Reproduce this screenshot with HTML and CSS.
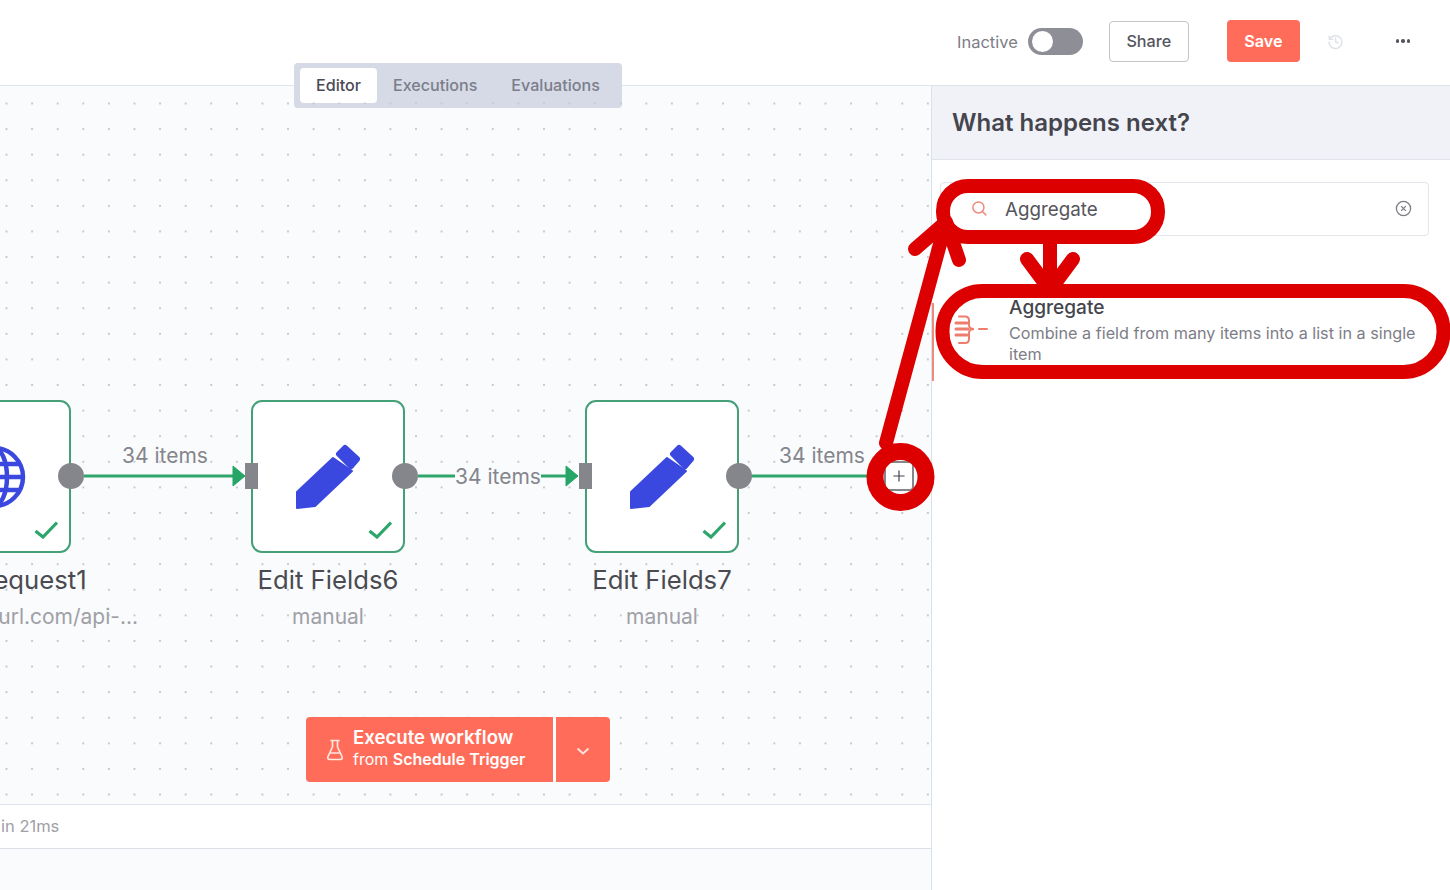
FILE: index.html
```html
<!DOCTYPE html>
<html lang="en">
<head>
    <meta charset="UTF-8">
    <meta name="viewport" content="width=device-width, initial-scale=1.0">
    <title>Workflow editor</title>
    <link rel="stylesheet" href="styles.css">
</head>
<body>
    <div class="page">
        <header class="topbar">
            <span class="status-label">Inactive</span>
            <span class="toggle"><span class="toggle-knob"></span></span>
            <button class="btn-share">Share</button>
            <button class="btn-save">Save</button>
            <svg class="icon-history" viewBox="0 0 16 16">
                <path d="M2.2 3v3h3M2.6 6A6 6 0 1 1 2 8.5M8 4.8V8l2.2 1.4"/>
            </svg>
            <span class="more-dots"><i></i><i></i><i></i></span>
        </header>

        <div class="tabs">
            <span class="tab tab-active">Editor</span>
            <span class="tab">Executions</span>
            <span class="tab">Evaluations</span>
        </div>

        <main class="workspace">
            <section class="canvas">
                <div class="stage">
                    <div class="node node-request">
                        <div class="node-box">
                            <svg class="icon-globe" viewBox="0 0 66 66">
                                <circle cx="33" cy="33" r="29"/>
                                <ellipse cx="33" cy="33" rx="13" ry="29"/>
                                <path d="M4 33H62M8 20H58M8 46H58"/>
                            </svg>
                            <svg class="node-check" viewBox="0 0 24 18"><path d="M1.5 10 9 16 23 1.5"/></svg>
                        </div>
                        <div class="node-title">HTTP Request1</div>
                        <div class="node-sub">https://dummyurl.com/api-...</div>
                    </div>
                    <div class="node node-six">
                        <div class="node-box">
                            <svg class="icon-pen" viewBox="0 0 66 66">
                                <path d="M2 64V48L38 14 57 27 20 62Z"/>
                                <path class="pen-cap" d="M44 10 50 4 62 15 56 22Z"/>
                            </svg>
                            <svg class="node-check" viewBox="0 0 24 18"><path d="M1.5 10 9 16 23 1.5"/></svg>
                        </div>
                        <div class="node-title">Edit Fields6</div>
                        <div class="node-sub">manual</div>
                    </div>
                    <div class="node node-seven">
                        <div class="node-box">
                            <svg class="icon-pen" viewBox="0 0 66 66">
                                <path d="M2 64V48L38 14 57 27 20 62Z"/>
                                <path class="pen-cap" d="M44 10 50 4 62 15 56 22Z"/>
                            </svg>
                            <svg class="node-check" viewBox="0 0 24 18"><path d="M1.5 10 9 16 23 1.5"/></svg>
                        </div>
                        <div class="node-title">Edit Fields7</div>
                        <div class="node-sub">manual</div>
                    </div>

                    <!-- edges and handles, in stage coordinates -->
                    <svg class="edges" viewBox="0 0 931 719">
                        <path class="edge" d="M84 391H238M418 391H572M751 391H868"/>
                        <path class="edge-head" d="M233 381 245 391 233 401ZM566 381 578 391 566 401Z"/>
                        <circle class="handle" cx="71" cy="391" r="13"/>
                        <circle class="handle" cx="405" cy="391" r="13"/>
                        <circle class="handle" cx="739" cy="391" r="13"/>
                        <rect class="handle" x="245" y="378" width="13" height="26"/>
                        <rect class="handle" x="579" y="378" width="13" height="26"/>
                    </svg>

                    <span class="edge-label edge-label-a">34 items</span>
                    <span class="edge-label edge-label-b">34 items</span>
                    <span class="edge-label edge-label-c">34 items</span>

                    <button class="add-node">
                        <svg viewBox="0 0 14 14"><path d="M7 0.5V13.5M0.5 7H13.5"/></svg>
                    </button>

                    <div class="execute">
                        <button class="execute-main">
                            <svg class="icon-flask" viewBox="0 0 18 22">
                                <path d="M5 1.5H13M6.5 1.5V8L2 17.5Q1 20.5 4 20.5H14Q17 20.5 16 17.5L11.5 8V1.5M4 14H14"/>
                            </svg>
                            <span class="execute-text">
                                <strong>Execute workflow</strong>
                                <small>from <b>Schedule Trigger</b></small>
                            </span>
                        </button>
                        <button class="execute-more">
                            <svg viewBox="0 0 14 8"><path d="M1.5 1.5 7 6.5 12.5 1.5"/></svg>
                        </button>
                    </div>
                </div>
                <div class="log-strip">in 21ms</div>
                <div class="log-rest"></div>
            </section>

            <aside class="panel">
                <div class="panel-header">What happens next?</div>
                <div class="search">
                    <svg class="icon-search" viewBox="0 0 16 16">
                        <circle cx="7" cy="7" r="5.2"/><path d="M11 11 14 14"/>
                    </svg>
                    <span class="search-text">Aggregate</span>
                    <svg class="icon-clear" viewBox="0 0 16 16">
                        <circle cx="8" cy="8" r="6.7"/><path d="M5.8 5.8 10.2 10.2M10.2 5.8 5.8 10.2"/>
                    </svg>
                </div>
                <div class="result">
                    <svg class="icon-aggregate" viewBox="0 0 36 30">
                        <path class="bars" d="M3 8H14M3 14H15M3 20H14"/>
                        <path d="M6 1.5H12Q16 1.5 16 5.5V10Q16 14 21 14Q16 14 16 18V24Q16 28 12 28H6M26 14H34"/>
                    </svg>
                    <div class="result-text">
                        <div class="result-title">Aggregate</div>
                        <div class="result-desc">Combine a field from many items into a list in a single item</div>
                    </div>
                </div>
            </aside>
        </main>

        <!-- hand-drawn red marks lying over the screenshot -->
        <svg class="marks" viewBox="0 0 1450 890">
            <rect x="943" y="186" width="215" height="51" rx="25"/>
            <rect x="942.5" y="291" width="501" height="81" rx="40"/>
            <circle cx="900.5" cy="477" r="25.5" class="mark-ring"/>
            <path d="M886 443 946 222M915 249 946 222 959 260M1050 244V288M1027 259 1050 290 1073 259"/>
        </svg>
    </div>
</body>
</html>
```

FILE: styles.css
```css
* {
    box-sizing: border-box;
}
body {
    font-family: Inter, "Liberation Sans", sans-serif;
    margin: 0;
    padding: 0;
    background: #ffffff;
    color: #45454d;
}
button {
    font-family: inherit;
    cursor: pointer;
}
.page {
    position: relative;
    width: 1450px;
    height: 890px;
    overflow: hidden;
    display: flex;
    flex-direction: column;
}

/* Top bar */
.topbar {
    height: 86px;
    flex: none;
    display: flex;
    align-items: center;
    padding: 0 35px 3px 957px;
    background: #ffffff;
    border-bottom: 1px solid #dfe3ea;
}
.status-label {
    padding-top: 1px;
    font-size: 16.5px;
    color: #7d7d87;
}
.toggle {
    width: 55px;
    height: 27px;
    margin-left: 10px;
    padding: 3px;
    border-radius: 14px;
    background: #8e8e96;
}
.toggle-knob {
    display: block;
    width: 21px;
    height: 21px;
    margin-left: 1px;
    border-radius: 50%;
    background: #ffffff;
}
.btn-share {
    width: 80px;
    height: 41px;
    margin-left: 26px;
    border: 1px solid #c3c3c8;
    border-radius: 4px;
    background: #ffffff;
    color: #55555d;
    font-size: 16.2px;
    font-weight: 500;
}
.btn-save {
    width: 73px;
    height: 42px;
    margin-left: 38px;
    border: none;
    border-radius: 4px;
    background: #ff6d5a;
    color: #ffffff;
    font-size: 16.2px;
    font-weight: 600;
}
.icon-history {
    width: 17px;
    height: 17px;
    margin-left: 27px;
    fill: none;
    stroke: #dfe2e8;
    stroke-width: 1.4;
    stroke-linecap: round;
    stroke-linejoin: round;
}
.more-dots {
    display: flex;
    gap: 2px;
    margin-left: 52px;
}
.more-dots i {
    width: 3.5px;
    height: 3.5px;
    border-radius: 50%;
    background: #55555d;
}

/* Tabs */
.tabs {
    position: absolute;
    left: 294px;
    top: 63px;
    width: 328px;
    height: 45px;
    display: flex;
    align-items: center;
    padding: 0 6px;
    border-radius: 4px;
    background: #d5dae6;
}
.tab {
    height: 35px;
    line-height: 35px;
    padding: 0 16px;
    font-size: 16.1px;
    font-weight: 500;
    color: #7b7e8a;
}
.tab:last-child {
    margin-left: 2px;
}
.tab-active {
    width: 77px;
    border-radius: 4px;
    background: #ffffff;
    color: #4a4a52;
}

/* Canvas */
.workspace {
    flex: 1;
    display: flex;
    min-height: 0;
}
.canvas {
    width: 932px;
    flex: none;
    display: flex;
    flex-direction: column;
    background: #f9fbfd;
    border-right: 1px solid #d9e2ea;
}
.stage {
    position: relative;
    flex: 1;
    overflow: hidden;
    background-image: radial-gradient(circle, #c6cad2 1px, transparent 1.2px);
    background-size: 25.6px 25.6px;
    background-position: 19.3px 4.7px;
}
.node {
    position: absolute;
    top: 314px;
    width: 154px;
    display: flex;
    flex-direction: column;
    align-items: center;
    white-space: nowrap;
}
.node-request {
    left: -83px;
}
.node-request .node-sub {
    margin-left: 4px;
}
.node-six {
    left: 251px;
}
.node-seven {
    left: 585px;
}
.node-box {
    position: relative;
    width: 154px;
    height: 153px;
    flex: none;
    display: flex;
    align-items: center;
    justify-content: center;
    background: #ffffff;
    border: 2.5px solid #45a078;
    border-radius: 11px;
}
.node-title {
    margin-top: 12px;
    font-size: 25.7px;
    line-height: 30px;
    color: #4a4a50;
}
.node-sub {
    margin-top: 9px;
    font-size: 21px;
    line-height: 26px;
    color: #a0a0a6;
}
.icon-pen {
    width: 66px;
    height: 66px;
    fill: #3b48e0;
    stroke: #3b48e0;
    stroke-width: 2;
    stroke-linejoin: round;
}
.icon-pen .pen-cap {
    stroke-width: 6;
}
.icon-globe {
    width: 66px;
    height: 66px;
    fill: none;
    stroke: #3b48e0;
    stroke-width: 4.5;
}
.node-check {
    position: absolute;
    right: 11px;
    bottom: 12px;
    width: 24px;
    height: 18px;
    fill: none;
    stroke: #2da56b;
    stroke-width: 3.2;
}
.edges {
    position: absolute;
    left: 0;
    top: -1px;
    width: 931px;
    height: 719px;
}
.edge {
    fill: none;
    stroke: #2fa56c;
    stroke-width: 3;
}
.edge-head {
    fill: #27a567;
    stroke: #27a567;
    stroke-width: 1;
    stroke-linejoin: round;
}
.handle {
    fill: #85868b;
}
.edge-label {
    position: absolute;
    font-size: 21px;
    line-height: 26px;
    color: #85858c;
    white-space: nowrap;
}
.edge-label-a {
    left: 122px;
    top: 357px;
}
.edge-label-b {
    left: 455px;
    top: 378px;
    background: #f9fbfd;
}
.edge-label-c {
    left: 779px;
    top: 357px;
}
.add-node {
    position: absolute;
    left: 884px;
    top: 375px;
    width: 30px;
    height: 30px;
    padding: 7px;
    display: flex;
    border: 2px solid #85868b;
    border-radius: 4px;
    background: #ffffff;
}
.add-node svg {
    fill: none;
    stroke: #45454d;
    stroke-width: 1.4;
}

/* Execute button */
.execute {
    position: absolute;
    left: 306px;
    top: 631px;
    display: flex;
    gap: 3px;
}
.execute button {
    height: 65px;
    border: none;
    background: #ff6d5a;
    color: #ffffff;
}
.execute-main {
    width: 247px;
    display: flex;
    align-items: center;
    gap: 9px;
    padding: 0 0 0 20px;
    border-radius: 4px 0 0 4px;
    text-align: left;
}
.icon-flask {
    width: 18px;
    height: 22px;
    fill: none;
    stroke: #ffe6e0;
    stroke-width: 1.7;
    stroke-linejoin: round;
    stroke-linecap: round;
}
.execute-text {
    display: flex;
    flex-direction: column;
    padding-bottom: 3px;
}
.execute-text strong {
    font-size: 18.6px;
    line-height: 22px;
    font-weight: 600;
}
.execute-text small {
    font-size: 16px;
    line-height: 22px;
    font-weight: 400;
}
.execute-text b {
    font-weight: 600;
}
.execute-more {
    width: 54px;
    padding: 0;
    border-radius: 0 4px 4px 0;
}
.execute-more svg {
    width: 14px;
    height: 8px;
    fill: none;
    stroke: #ffe6e0;
    stroke-width: 1.7;
}

/* Log strip */
.log-strip {
    height: 45px;
    flex: none;
    padding-left: 1px;
    line-height: 43px;
    font-size: 16.5px;
    color: #a0a0a6;
    background: #ffffff;
    border-top: 1px solid #dfe3ea;
    border-bottom: 1px solid #dcdfe6;
}
.log-rest {
    height: 41px;
    flex: none;
}

/* Node creator panel */
.panel {
    flex: 1;
    min-width: 0;
    background: #ffffff;
}
.panel-header {
    height: 74px;
    padding-left: 20px;
    line-height: 74px;
    font-size: 24px;
    font-weight: 600;
    color: #45454d;
    background: #f0f2f8;
    border-bottom: 1px solid #dfe3ea;
}
.search {
    display: flex;
    align-items: center;
    height: 54px;
    margin: 22px 21px 0 8px;
    padding: 0 16px 0 30px;
    border: 1px solid #e4e6ec;
    border-radius: 4px;
}
.icon-search {
    width: 17px;
    height: 17px;
    margin-bottom: 2px;
    fill: none;
    stroke: #ee8a7c;
    stroke-width: 1.4;
    stroke-linecap: round;
}
.search-text {
    flex: 1;
    margin-left: 17px;
    font-size: 18.8px;
    color: #55555d;
}
.icon-clear {
    width: 17px;
    height: 17px;
    margin-bottom: 2px;
    fill: none;
    stroke: #7d7d87;
    stroke-width: 1.2;
}
.result {
    position: relative;
    display: flex;
    align-items: flex-start;
    gap: 20px;
    height: 85px;
    margin-top: 60px;
    padding: 0 20px 0 21px;
}
.result::before {
    content: "";
    position: absolute;
    left: 0;
    top: 7px;
    bottom: 0;
    width: 1.5px;
    background: #ee8a7c;
}
.icon-aggregate {
    width: 36px;
    height: 30px;
    flex: none;
    margin-top: 19px;
    fill: none;
    stroke: #ee7d6e;
    stroke-width: 2;
    stroke-linecap: round;
}
.icon-aggregate .bars {
    stroke-width: 3;
}
.result-title {
    font-size: 19.1px;
    line-height: 23px;
    font-weight: 500;
    color: #45454d;
}
.result-desc {
    margin-top: 4px;
    font-size: 16.2px;
    line-height: 21px;
    color: #7d7d87;
}

/* Annotations */
.marks {
    position: absolute;
    left: 0;
    top: 0;
    width: 1450px;
    height: 890px;
    pointer-events: none;
    fill: none;
    stroke: #dc0000;
    stroke-width: 14;
    stroke-linecap: round;
    stroke-linejoin: round;
}
.marks .mark-ring {
    stroke-width: 17;
}
```
